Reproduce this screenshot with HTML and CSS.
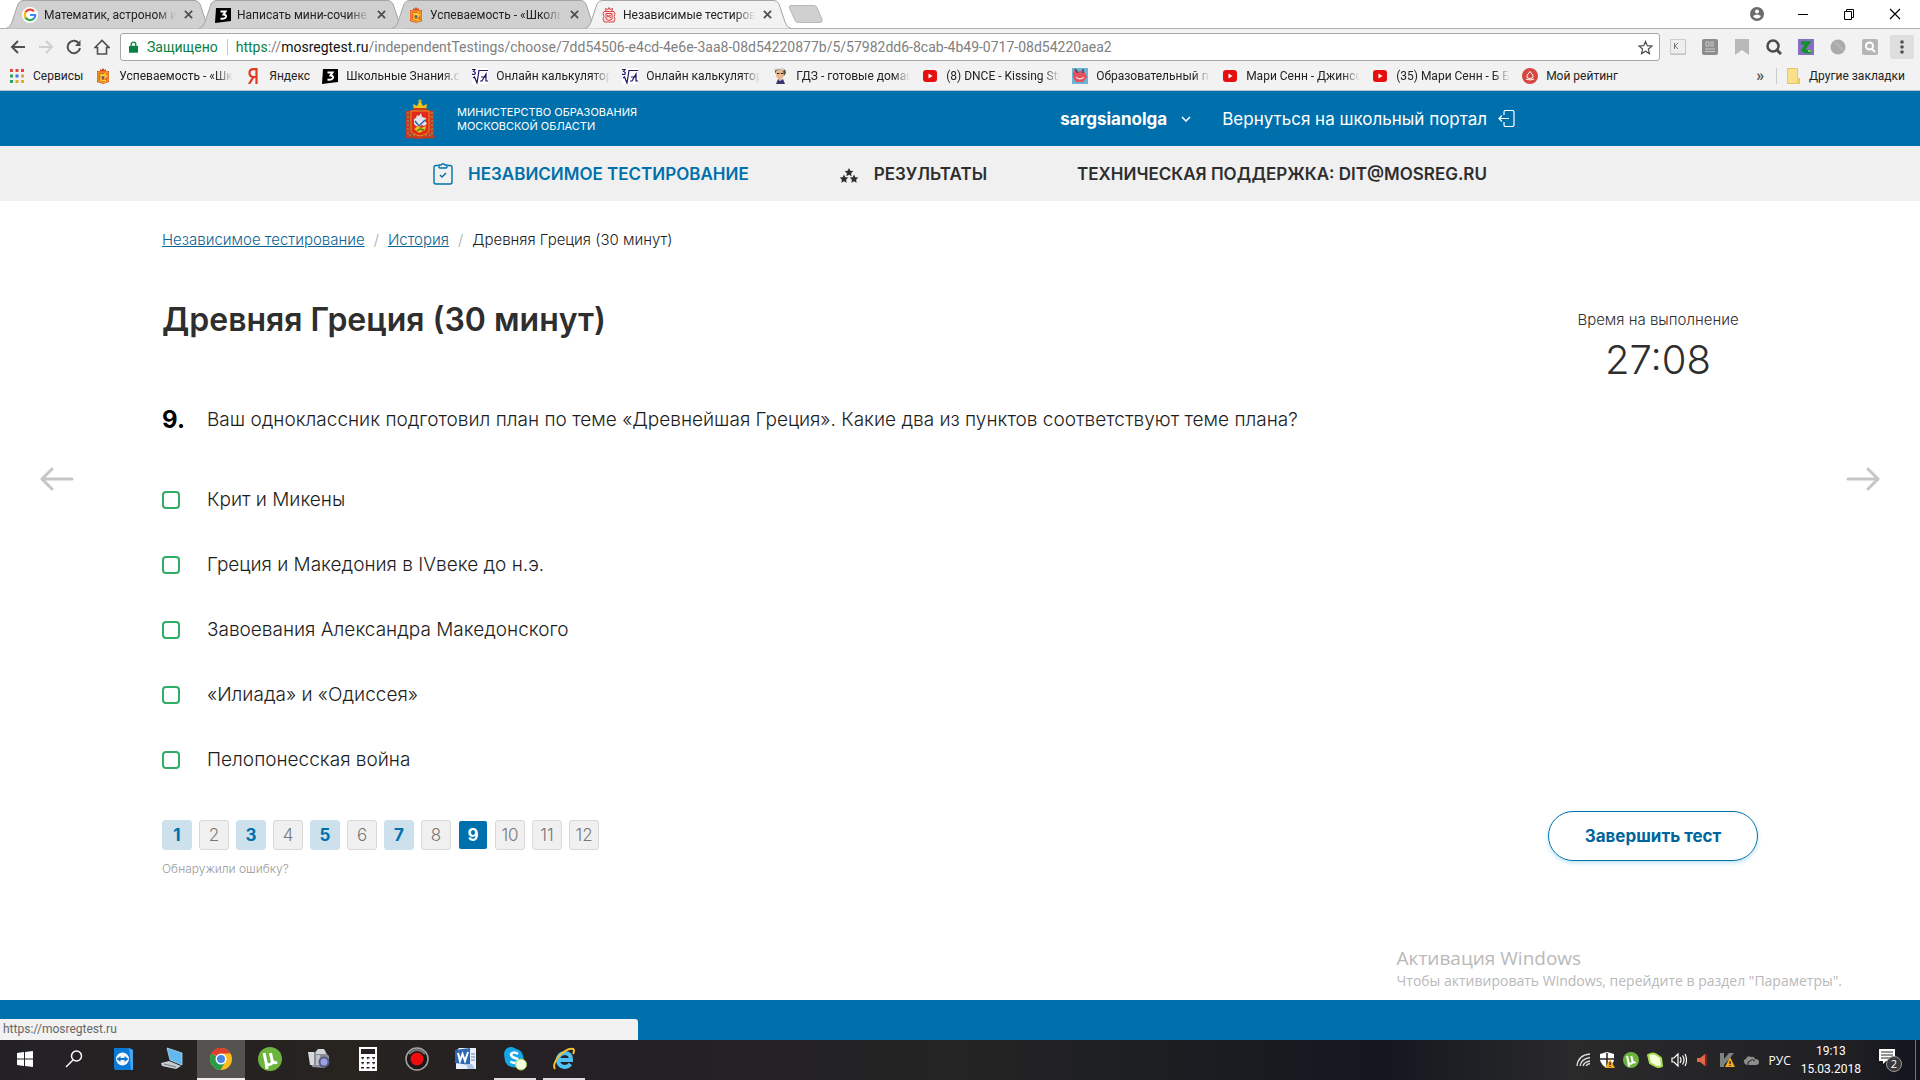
FILE: index.html
```html
<!DOCTYPE html>
<html lang="ru">
<head>
<meta charset="utf-8">
<title>Независимые тестирования</title>
<meta name="viewport" content="width=device-width, initial-scale=1">
<link rel="stylesheet" href="styles.css">
</head>
<body>
<svg class="sprite" aria-hidden="true">
  <symbol id="crest" viewBox="0 0 30 40">
    <path d="M9 11 8 5l4 2 3-6 3 6 4-2-1 6z" fill="#f0c414"/>
    <path d="M15 0v4M13 2h4" stroke="#e9b60f" stroke-width="1"/>
    <path d="M1 12q7 0 8-3h12q1 3 8 3v24l1 3-10 .5-5 .5-5-.5L0 39l1-3z" fill="#c93a24"/>
    <path d="M3 13v23h24V13" fill="none" stroke="#8a8a5a" stroke-width="1.500" stroke-dasharray="2 2"/>
    <path d="M6 12h18v20q-1 3-9 5-8-2-9-5z" fill="#e02b1c" stroke="#f0a414" stroke-width=".8"/>
    <path d="M9 25v-5l2-1 1-3 2 1 2-3 1 4 4 1-1 3 2 3-3 2-2-1-3 2-3-1z" fill="#dfe6ee"/>
    <path d="M10 22l4 5 6-6" fill="none" stroke="#35649c" stroke-width="1.500"/>
    <path d="M9 30l4-3 3 2 5-2-1 4-6 3z" fill="#e7c41b"/>
    <path d="M12 32l3-2 4 1" fill="none" stroke="#3c7a35" stroke-width="1.300"/>
  </symbol>
  <symbol id="crest-small" viewBox="0 0 16 16">
    <path d="M5 3V1l1.500 1L8 0l1.500 2L11 1v2h3v11l-6 2-6-2V3z" fill="#d9482b"/>
    <path d="M3 4h10v9l-5 2-5-2z" fill="#e8641f" stroke="#f0b323"/>
    <path d="M6 12V7h4v3l2-3M5 6l3 2 3-3M5 12l6 1" fill="none" stroke="#f8d33c" stroke-width="1.300"/>
    <path d="M7 9l2 1" stroke="#4a5f8c" stroke-width="2"/>
  </symbol>
  <symbol id="crest-red" viewBox="0 0 16 16">
    <g fill="none" stroke="#d84a4a"><path d="M5 4l-.5-2.500L7 2.500 8 .5l1 2 2.500-1L11 4M3 4.500h10l1 2-1 3 1 2-1 3.500H3l-1-3.500 1-2-1-3z" fill="#f9dede"/><path d="M5 6.500h6V12l-3 1.500L5 12zM6 8l4 3M10 8l-4 2"/></g>
  </symbol>
  <symbol id="znanija" viewBox="0 0 16 16">
    <path d="M1 1h15v13L0 16z" fill="#000"/><path d="M5.500 4.500h5L8.500 7.500q3 .3 2.500 2.500-1 2.500-5.500 1.500" fill="none" stroke="#fff" stroke-width="2"/>
  </symbol>
  <symbol id="root" viewBox="0 0 16 16">
    <path fill="#fff" d="M0 0h16v16H0z"/><path d="M0 1.500h3L1.500 3.500Q4 4 3 6 2 7 0 6M1 10l1.500-1L5 15 7 2.500h9M8 13h2l4-7v7h2M9 9h5" fill="none" stroke="#1b1464" stroke-width="1.200"/>
  </symbol>
  <symbol id="youtube" viewBox="0 0 16 16"><rect x="1" y="2" width="14" height="12" rx="3" fill="#e60f0f"/><path d="M6.500 5.500v5L10.500 8z" fill="#fff"/></symbol>
  <symbol id="utorrent" viewBox="0 0 24 24"><circle cx="12" cy="12" r="12" fill="#6cb33f"/><path d="M6 6l2 9q1 4 5 2 2-1 1-4L12.500 6M14 13q2 4 5 2M8 15l1 7" fill="none" stroke="#fff" stroke-width="3"/></symbol>
</svg>

<div class="browser">
  <div class="tabstrip">
    <nav class="tabs" aria-label="Вкладки">
      <div class="tab">
        <svg class="tab-shape" viewBox="0 0 206 29" preserveAspectRatio="none"><path d="M0 28.500Q4 28 6 22L12 4Q14 .5 17 .5H189Q192 .5 194 4L200 22Q202 28 206 28.500"/></svg>
        <svg class="i16" viewBox="0 0 16 16"><circle cx="8" cy="8" r="8" fill="#fff"/><g fill="none" stroke-width="2.200"><path d="M12 4.200A5.300 5.300 0 0 0 3.500 5.300" stroke="#ea4335"/><path d="M3.500 5.300a5.300 5.300 0 0 0 0 5.400" stroke="#fbbc05"/><path d="M3.500 10.700a5.300 5.300 0 0 0 8.300.9" stroke="#34a853"/><path d="M11.800 11.600Q13.400 10 13.200 8H8" stroke="#4285f4"/></g></svg>
        <a class="tab-name" href="#">Математик, астроном и</a>
        <button class="tab-close" aria-label="Закрыть"><svg viewBox="0 0 10 10"><path d="M1 1l8 8M9 1L1 9"/></svg></button>
      </div>
      <div class="tab">
        <svg class="tab-shape" viewBox="0 0 206 29" preserveAspectRatio="none"><path d="M0 28.500Q4 28 6 22L12 4Q14 .5 17 .5H189Q192 .5 194 4L200 22Q202 28 206 28.500"/></svg>
        <svg class="i16"><use href="#znanija"/></svg>
        <a class="tab-name" href="#">Написать мини-сочинен</a>
        <button class="tab-close" aria-label="Закрыть"><svg viewBox="0 0 10 10"><path d="M1 1l8 8M9 1L1 9"/></svg></button>
      </div>
      <div class="tab">
        <svg class="tab-shape" viewBox="0 0 206 29" preserveAspectRatio="none"><path d="M0 28.500Q4 28 6 22L12 4Q14 .5 17 .5H189Q192 .5 194 4L200 22Q202 28 206 28.500"/></svg>
        <svg class="i16"><use href="#crest-small"/></svg>
        <a class="tab-name" href="#">Успеваемость - «Школь</a>
        <button class="tab-close" aria-label="Закрыть"><svg viewBox="0 0 10 10"><path d="M1 1l8 8M9 1L1 9"/></svg></button>
      </div>
      <div class="tab tab-active">
        <svg class="tab-shape" viewBox="0 0 206 29" preserveAspectRatio="none"><path d="M0 28.500Q4 28 6 22L12 4Q14 .5 17 .5H189Q192 .5 194 4L200 22Q202 28 206 28.500"/></svg>
        <svg class="i16"><use href="#crest-red"/></svg>
        <a class="tab-name" href="#">Независимые тестирова</a>
        <button class="tab-close" aria-label="Закрыть"><svg viewBox="0 0 10 10"><path d="M1 1l8 8M9 1L1 9"/></svg></button>
      </div>
      <button class="tab-new" aria-label="Новая вкладка"><svg viewBox="0 0 36 18"><path d="M3 .5h23q2 0 3 2l5 12q1 3-2 3H10q-2 0-3-2L1.500 3Q.5.500 3 .5z"/></svg></button>
    </nav>
    <div class="window-buttons">
      <button aria-label="Профиль"><svg viewBox="0 0 14 14"><circle cx="7" cy="7" r="7" fill="#6b6b6b"/><circle cx="7" cy="4.500" r="2" fill="#fff"/><path d="M3 9q4-3 8 0-1.500 2.500-4 2.500T3 9z" fill="#fff"/></svg></button>
      <button aria-label="Свернуть"><svg viewBox="0 0 14 14"><path d="M2 7.500h10" stroke="#000"/></svg></button>
      <button aria-label="Окно"><svg viewBox="0 0 14 14"><path d="M2.500 4.500h7v8h-7zM4.500 4V2.500h7v8H10" fill="none" stroke="#000"/></svg></button>
      <button aria-label="Закрыть окно"><svg viewBox="0 0 14 14"><path d="M2 2l10 10M12 2L2 12" stroke="#000" stroke-width="1.200"/></svg></button>
    </div>
  </div>

  <div class="toolbar">
    <div class="nav-buttons">
      <button aria-label="Назад"><svg viewBox="0 0 16 16"><path d="M15 8H2M8 2L2 8l6 6"/></svg></button>
      <button class="off" aria-label="Вперёд"><svg viewBox="0 0 16 16"><path d="M1 8h13M8 2l6 6-6 6"/></svg></button>
      <button aria-label="Обновить"><svg viewBox="0 0 16 16"><path d="M13 4.500A6.200 6.200 0 1 0 14 9"/><path d="M14.500 1v6H9z" fill="#505050" stroke="none"/></svg></button>
      <button aria-label="Домой"><svg viewBox="0 0 16 16"><path d="M1 8.500L8 1.500l7 7h-2.500V15h-9V8.500z" stroke-width="1.600"/></svg></button>
    </div>
    <div class="omnibox">
      <svg class="lock" viewBox="0 0 10 13"><path d="M1 5h8q1 0 1 1v6q0 1-1 1H1q-1 0-1-1V6q0-1 1-1z" fill="#0b8043"/><path d="M2.500 5V3.500a2.500 2.500 0 0 1 5 0V5" fill="none" stroke="#0b8043" stroke-width="1.500"/></svg>
      <span class="secure">Защищено</span>
      <label class="host" for="address"><span class="scheme">https</span><span class="dim">://</span>mosregtest.ru</label>
      <input id="address" class="path" type="text" value="/independentTestings/choose/7dd54506-e4cd-4e6e-3aa8-08d54220877b/5/57982dd6-8cab-4b49-0717-08d54220aea2">
      <svg class="star" viewBox="0 0 16 16"><path d="M8 1.500l1.900 4.600 4.900.4-3.700 3.200 1.100 4.800L8 11.900l-4.200 2.600 1.100-4.800L1.200 6.500l4.900-.4z" fill="none" stroke="#505050" stroke-width="1.300"/></svg>
    </div>
    <div class="extensions">
      <button aria-label="K"><svg viewBox="0 0 16 16"><path d="M.5.500h15v15H.5z" fill="#eee" stroke="#ccc"/><path d="M1 15h15V2" fill="none" stroke="#bbb"/><path d="M4.500 4v6M8 4L5 7l3 3" fill="none" stroke="#777"/></svg></button>
      <button aria-label="Расширение"><svg viewBox="0 0 16 16"><rect width="16" height="16" rx="2" fill="#8d8d8d"/><path d="M4 3h3v4H4zM8 3h4M8 5h4M8 7h4M3 10h10M3 12.500h10" fill="none" stroke="#ccc"/></svg></button>
      <button aria-label="Закладка"><svg viewBox="0 0 16 16"><path d="M1 0h14v16l-7-5-7 5z" fill="#b9b9b9"/></svg></button>
      <button aria-label="Поиск"><svg viewBox="0 0 16 16"><circle cx="7" cy="7" r="5.500" fill="none" stroke="#4b4b4b" stroke-width="2.500"/><path d="M10.500 10.500L15 15" stroke="#4b4b4b" stroke-width="3"/></svg></button>
      <button aria-label="Z"><svg viewBox="0 0 16 16"><path d="M0 0h16v16H0z" fill="#8670c4"/><path d="M3 4h7l-5 7q4 3 8 1" fill="none" stroke="#14902a" stroke-width="3.500"/><path d="M10 12h3" stroke="#69d451" stroke-width="2"/></svg></button>
      <button aria-label="Круг"><svg viewBox="0 0 16 16"><circle cx="8" cy="8" r="7.500" fill="#aaa"/><path d="M5 3l8 8" stroke="#b8b8b8" stroke-width="2"/></svg></button>
      <button aria-label="Поиск по странице"><svg viewBox="0 0 16 16"><rect width="16" height="16" rx="2" fill="#b5b5b5"/><circle cx="7.500" cy="7" r="3.500" fill="none" stroke="#fff" stroke-width="2"/><path d="M10 10l3 3" stroke="#fff" stroke-width="2"/></svg></button>
      <button class="menu" aria-label="Меню"><svg viewBox="0 0 16 16"><g fill="#505050"><circle cx="8" cy="3" r="1.800"/><circle cx="8" cy="8" r="1.800"/><circle cx="8" cy="13" r="1.800"/></g></svg></button>
    </div>
  </div>

  <div class="bookmarks">
    <a class="bm" href="#"><svg class="i16" viewBox="0 0 16 16"><path d="M1 1h3v3H1zM6.500 1h3v3h-3zM12 1h3v3h-3z" fill="#dd4b3e"/><path d="M1 6.500h3v3H1z" fill="#30a05a"/><path d="M6.500 6.500h3v3h-3z" fill="#4374e0"/><path d="M12 6.500h3v3h-3zM6.500 12h3v3h-3zM12 12h3v3h-3z" fill="#e0a92f"/><path d="M1 12h3v3H1z" fill="#30a05a"/></svg><span>Сервисы</span></a>
    <a class="bm long" href="#"><svg class="i16"><use href="#crest-small"/></svg><span>Успеваемость - «Шко</span></a>
    <a class="bm" href="#"><svg class="i16" viewBox="0 0 16 16"><path d="M11.500 0v16M11 1.200H8.500Q4.500 1.200 4.500 5t4 4H11M8.500 9L4 16" fill="none" stroke="#e03a20" stroke-width="2.200"/></svg><span>Яндекс</span></a>
    <a class="bm long" href="#"><svg class="i16"><use href="#znanija"/></svg><span>Школьные Знания.co</span></a>
    <a class="bm long" href="#"><svg class="i16"><use href="#root"/></svg><span>Онлайн калькулятор</span></a>
    <a class="bm long" href="#"><svg class="i16"><use href="#root"/></svg><span>Онлайн калькулятор</span></a>
    <a class="bm long" href="#"><svg class="i16" viewBox="0 0 16 16"><path d="M3 4q-1-4 5-4t6 5l-2 3H5z" fill="#5d5138"/><path d="M4 3q4-3 7 0l1 5-3 4H7L4 8z" fill="#e8b98b"/><path d="M2 2q5-3 10 0" stroke="#ddd" stroke-width="2" fill="none"/><path d="M5 5.500h2.500M9 5.500h2" stroke="#222"/><path d="M4 16l2-5 2 2 3-2 2 5z" fill="#37366f"/></svg><span>ГДЗ - готовые домаш</span></a>
    <a class="bm long" href="#"><svg class="i16"><use href="#youtube"/></svg><span>(8) DNCE - Kissing Str</span></a>
    <a class="bm long" href="#"><svg class="i16" viewBox="0 0 16 16"><path d="M0 0h16v16H0z" fill="#6cb4d4"/><path d="M1 5l2-4 3 3 5-2 2 3 2 4-4 5H4L1 9z" fill="#e5505f"/><path d="M3 1l3 4M11 1v4" stroke="#39506f" stroke-width="1.500"/><path d="M4 9q4 4 8 0" stroke="#fff" fill="none"/></svg><span>Образовательный по</span></a>
    <a class="bm long" href="#"><svg class="i16"><use href="#youtube"/></svg><span>Мари Сенн - Джинсо</span></a>
    <a class="bm long" href="#"><svg class="i16"><use href="#youtube"/></svg><span>(35) Мари Сенн - Б Б</span></a>
    <a class="bm" href="#"><svg class="i16" viewBox="0 0 16 16"><circle cx="8" cy="8" r="8" fill="#d5473f"/><path d="M8 3.500l2 2.500q3 4-2 4.500Q3 10 6 6zM4 11q4 2 8 0" fill="none" stroke="#fff"/></svg><span>Мой рейтинг</span></a>
    <button class="more" aria-label="Ещё закладки">»</button>
    <a class="bm other" href="#"><svg class="i16" viewBox="0 0 16 16"><path d="M2 0h11v16H2z" fill="#fbe08a"/><path d="M12 11h3v5h-3z" fill="#f6cf56"/><path d="M2.500.5h10v10h2v5h-12z" fill="none" stroke="#e8c665"/></svg><span>Другие закладки</span></a>
  </div>
</div>

<div class="site">
  <header class="site-header">
    <div class="header-inner">
      <svg class="crest"><use href="#crest"/></svg>
      <div class="ministry">МИНИСТЕРСТВО ОБРАЗОВАНИЯ<br>МОСКОВСКОЙ ОБЛАСТИ</div>
      <button class="user">sargsianolga <svg viewBox="0 0 10 6"><path d="M1 1l4 4 4-4"/></svg></button>
      <a class="portal" href="#">Вернуться на школьный портал <svg viewBox="0 0 17 17"><path d="M6 5V2q0-1.500 1.500-1.500h7Q16 .5 16 2v13q0 1.500-1.500 1.500h-7Q6 16.500 6 15v-3M11 8.500H1M4 5.500l-3 3 3 3"/></svg></a>
    </div>
  </header>
  <nav class="site-nav">
    <a class="current" href="#"><svg viewBox="0 0 20 22"><path d="M5 2.500H3Q1 2.500 1 4.500V19q0 2 2 2h14q2 0 2-2V4.500q0-2-2-2h-2M6 2h2q2-2.500 4 0h2v2q0 1-1 1H7Q6 5 6 4zM7 12l2 2 4-4" fill="none" stroke="#0070ac" stroke-width="1.400"/></svg>НЕЗАВИСИМОЕ ТЕСТИРОВАНИЕ</a>
    <a href="#"><svg viewBox="0 0 20 22"><g fill="#2e2e2e"><path id="st" d="M10 5l1.300 2.700 3 .4-2.200 2.100.5 3L10 11.800l-2.600 1.400.5-3-2.200-2.100 3-.4z"/><use href="#st" x="-5" y="6.500"/><use href="#st" x="5" y="6.500"/></g></svg>РЕЗУЛЬТАТЫ</a>
    <a href="#">ТЕХНИЧЕСКАЯ ПОДДЕРЖКА: DIT@MOSREG.RU</a>
  </nav>

  <div class="stage">
    <button class="step" aria-label="Предыдущий вопрос"><svg viewBox="0 0 34 24"><path d="M32 12H2M12 2L2 12l10 10"/></svg></button>
    <main class="test">
      <nav class="crumbs" aria-label="Путь">
        <a href="#">Независимое тестирование</a><i>/</i><a href="#">История</a><i>/</i><span>Древняя Греция (30 минут)</span>
      </nav>
      <div class="head">
        <h1>Древняя Греция (30 минут)</h1>
        <div class="timer"><span>Время на выполнение</span><time>27:08</time></div>
      </div>
      <form>
        <div class="question"><b>9.</b><p>Ваш одноклассник подготовил план по теме «Древнейшая Греция». Какие два из пунктов соответствуют теме плана?</p></div>
        <div class="answers">
          <label><input type="checkbox">Крит и Микены</label>
          <label><input type="checkbox">Греция и Македония в IVвеке до н.э.</label>
          <label><input type="checkbox">Завоевания Александра Македонского</label>
          <label><input type="checkbox">«Илиада» и «Одиссея»</label>
          <label><input type="checkbox">Пелопонесская война</label>
        </div>
        <div class="bottom">
          <div>
            <div class="pages">
              <button type="button" class="done">1</button><button type="button">2</button><button type="button" class="done">3</button><button type="button">4</button><button type="button" class="done">5</button><button type="button">6</button><button type="button" class="done">7</button><button type="button">8</button><button type="button" class="now">9</button><button type="button">10</button><button type="button">11</button><button type="button">12</button>
            </div>
            <a class="report" href="#">Обнаружили ошибку?</a>
          </div>
          <button type="button" class="finish">Завершить тест</button>
        </div>
      </form>
    </main>
    <button class="step next" aria-label="Следующий вопрос"><svg viewBox="0 0 34 24"><path d="M2 12h30M22 2l10 10-10 10"/></svg></button>
    <div class="watermark"><strong>Активация Windows</strong><span>Чтобы активировать Windows, перейдите в раздел "Параметры".</span></div>
  </div>
  <footer class="site-footer"><div class="status">https://mosregtest.ru</div></footer>
</div>

<div class="taskbar">
  <div class="apps">
    <button aria-label="Пуск"><svg viewBox="0 0 24 24"><path d="M4 6l7-1v6.500H4zM12 5l8-1v7.500h-8zM4 12.500h7V19l-7-1zM12 12.500h8V20l-8-1z" fill="#fff"/></svg></button>
    <button aria-label="Поиск"><svg viewBox="0 0 24 24"><circle cx="14.500" cy="9" r="5" fill="none" stroke="#fff" stroke-width="1.500"/><path d="M11 13l-7 7" stroke="#fff" stroke-width="1.500"/></svg></button>
    <button aria-label="TeamViewer"><svg viewBox="0 0 24 24"><path d="M3 1h15l4 2v20H4L3 21z" fill="#0b78d4"/><path d="M18 1l4 2v20h-2z" fill="#45a5ee"/><circle cx="11.500" cy="12" r="6.500" fill="#f4f8fc"/><path d="M5.500 12l4-3v2h4V9l4 3-4 3v-2h-4v2z" fill="#1178cf"/></svg></button>
    <button aria-label="Компьютер"><svg viewBox="0 0 24 24"><path d="M7 1l15 5v12L10 13z" fill="#62b8ef" stroke="#a8dcf8" stroke-width=".8"/><path d="M1 16l8-2 12 5-5 3-14-3z" fill="#c7ced3"/><path d="M4 17l12 3" stroke="#6b7780"/></svg></button>
    <button class="active" aria-label="Chrome"><svg viewBox="0 0 24 24"><circle cx="12" cy="12" r="11" fill="#fbbc1c"/><path d="M2.500 6.500A11 11 0 0 1 21.500 6.500H12z" fill="#dc3e2f"/><path d="M2.500 6.500a11 11 0 0 0 9 16.500l5-8.500L12 12z" fill="#289c4b"/><path d="M2.500 6.500A11 11 0 0 1 12 1v10z" fill="#dc3e2f"/><circle cx="12" cy="12" r="5.500" fill="#fff"/><circle cx="12" cy="12" r="4" fill="#4a86e8"/></svg></button>
    <button aria-label="uTorrent"><svg><use href="#utorrent"/></svg></button>
    <button aria-label="Камера"><svg viewBox="0 0 24 24"><path d="M3 6l5-1 2-2h8l2 4 2 2v8l-5 4-12-1z" fill="#8b8e96"/><path d="M1 5h6v13H3z" fill="#d8d9de"/><path d="M9 5l2-3h6l2 5H9z" fill="#d4d5da"/><path d="M9 8h4v10H9z" fill="#c0c1c6"/><circle cx="17" cy="15" r="5.500" fill="#555c82"/><circle cx="17" cy="15" r="3.500" fill="#9ba2df"/></svg></button>
    <button aria-label="Калькулятор"><svg viewBox="0 0 24 24"><path d="M3 0h18v24H3z" fill="#fff"/><path d="M5 2h14v5H5z" fill="#242124"/><path d="M5 10h3v1.500H6.500V13M10.500 10h3v1.500H12V13M16 10h3v1.500h-1.500V13M5 15h3v1.500H6.500V18M10.500 15h3v1.500H12V18M16 15h3v1.500h-1.500V18M5 20h3v1.500H5zM10.500 20h3v1.500h-3zM16 20h3v1.500h-3z" fill="#242124"/></svg></button>
    <button aria-label="Запись"><svg viewBox="0 0 24 24"><circle cx="12" cy="12" r="11" fill="#1c1819" stroke="#a7a3a4" stroke-width="1.500"/><path d="M4 7q8-8 16 0" stroke="#777" stroke-width="2" fill="none"/><circle cx="12" cy="12" r="6.500" fill="#f00c0c"/></svg></button>
    <button aria-label="Word"><svg viewBox="0 0 24 24"><path d="M5 1h17v21H2V4z" fill="#e9f0fa"/><path d="M1 3l15-2v17L1 16z" fill="#2d66b3"/><path d="M4 6l2 8 2.500-7 2.500 7 3-9" fill="none" stroke="#fff" stroke-width="2"/><path d="M17 7h4M17 10h4M17 13h4" stroke="#5282c3"/><path d="M12 17h6l3 5h-7z" fill="#aec6e5"/></svg></button>
    <button class="open" aria-label="Skype"><svg viewBox="0 0 24 24"><circle cx="8" cy="7" r="7" fill="#16a7e8"/><circle cx="11" cy="11" r="9.500" fill="#16a7e8"/><path d="M15 7q-4-3-7 0 0 3 4 4t3 3.500q-3 3-7.500 0" fill="none" stroke="#fff" stroke-width="2.500"/><circle cx="18" cy="17.500" r="5.500" fill="#f5ffe0" stroke="#a9cf55"/></svg></button>
    <button class="open" aria-label="Internet Explorer"><svg viewBox="0 0 24 24"><path d="M18.500 17Q16 20 12.500 20 6 19 6 13t6.500-7q6.500 0 6.500 7H7" fill="none" stroke="#4fc1f3" stroke-width="4"/><path d="M3 22Q0 18 7 9 16 0 21 2q2 1 0 5" fill="none" stroke="#f3c12f" stroke-width="2"/></svg></button>
  </div>
  <div class="tray">
    <div class="tray-icons">
      <svg viewBox="0 0 16 16"><g fill="none" stroke="#ddd" stroke-width="1.300"><path d="M2 14Q3 3 15 2M5 14Q6 7 15 5.500M8 14q1-4 7-5M11 14q1-2 4-2.500"/></g></svg>
      <svg viewBox="0 0 16 16"><path d="M1 2l7-2 7 2v6q-1 5-7 8-6-3-7-8z" fill="#fff"/><path d="M8 1v14M1 7h14" stroke="#242426" stroke-width="1.500"/><path d="M11 7l5 9H6z" fill="#f4aa21"/><path d="M11 10v3M11 14v1" stroke="#222" stroke-width="1.300"/></svg>
      <svg><use href="#utorrent"/></svg>
      <svg viewBox="0 0 16 16"><path d="M1 3q5-3 9 0l4 3 1 8q-4 2-7 0l-5-3z" fill="#f4ffdc" stroke="#a8d94c" stroke-width="2"/></svg>
      <svg viewBox="0 0 16 16"><g fill="none" stroke="#fff" stroke-width="1.200"><path d="M1 6h2l4-4v12l-4-4H1zM9 5q2 3 0 6M11.500 3.500q3 4.500 0 9M14 2q3 6 0 12"/></g></svg>
      <svg viewBox="0 0 16 16"><path d="M2 6h3l5-4v12l-5-4H2z" fill="#e0674a"/><path d="M11 2v12" stroke="#6b2b22" stroke-width="2"/></svg>
      <svg viewBox="0 0 16 16"><path d="M1 1h4v14H1zM5 7l5-6h5L5 13z" fill="#7d8380"/><path d="M11 5l5 10H6z" fill="#f7a81d"/><path d="M11 9v3M11 13v1" stroke="#222" stroke-width="1.300"/></svg>
      <svg viewBox="0 0 16 16"><path d="M2 12q-3-4 1-5 1-4 5-2 3-1 4 2 4 0 4 3t-3 3H4z" fill="#8d8d8d"/><path d="M5 13q-1-4 2-4 2-3 5 0" fill="none" stroke="#242426"/></svg>
    </div>
    <button class="lang">РУС</button>
    <div class="clock"><time>19:13</time><time>15.03.2018</time></div>
    <button class="notice" aria-label="Уведомления"><svg viewBox="0 0 26 26"><path d="M2 2h16v12H9l-3 3v-3H2z" fill="#fff"/><path d="M4 5h12M4 8h12M4 11h12" stroke="#242426"/><circle cx="17" cy="17" r="7.500" fill="#39393b" stroke="#99999b"/><text x="17" y="21" text-anchor="middle">2</text></svg></button>
  </div>
</div>
</body>
</html>
```
FILE: styles.css
```css
* { box-sizing: border-box; }
body {
  margin: 0;
  min-height: 100vh;
  display: flex;
  flex-direction: column;
  background: #fff;
  color: #1d1d1d;
  font-family: "Open Sans", "Noto Sans", sans-serif;
  font-size: 12px;
}
button { border: 0; padding: 0; background: none; font: inherit; color: inherit; }
a { color: inherit; text-decoration: none; }
svg { display: block; flex: none; }
.sprite { position: absolute; width: 0; height: 0; }
.i16 { width: 16px; height: 16px; }

/* Browser frame */
.browser { background: #f2f2f2; color: #222; font-family: Roboto, "Open Sans", sans-serif; white-space: nowrap; border-bottom: 1px solid #b8c4cb; }
.tabstrip { display: flex; justify-content: space-between; height: 29px; background: #fff; border-bottom: 1px solid #b0b0b0; }
.tabs { display: flex; padding-left: 6px; }
.tab { position: relative; display: flex; align-items: center; width: 206px; height: 29px; margin-right: -13px; padding: 0 19px 0 16px; }
.tab-shape { position: absolute; inset: 0; width: 100%; height: 100%; fill: #d0d0d0; stroke: #a5a5a5; }
.tab-active { z-index: 1; }
.tab-active .tab-shape { fill: #f2f2f2; }
.tab > .i16 { position: relative; }
.tab-name { position: relative; flex: 1; margin: 0 8px 0 6px; overflow: hidden; mask-image: linear-gradient(90deg, #000 85%, transparent); }
.tab-close { position: relative; }
.tab-close svg { width: 9px; height: 9px; stroke: #505050; stroke-width: 2; }
.tab-new { margin-left: 10px; }
.tab-new svg { width: 36px; height: 18px; fill: #d0d0d0; stroke: #b8b8b8; }
.window-buttons { display: flex; align-items: center; gap: 32px; padding-right: 18px; }
.window-buttons svg { width: 14px; height: 14px; }

.toolbar { display: flex; align-items: center; gap: 10px; height: 36px; padding: 0 6px 0 10px; }
.nav-buttons { display: flex; gap: 12px; }
.nav-buttons svg { width: 16px; height: 16px; fill: none; stroke: #505050; stroke-width: 2; }
.nav-buttons .off svg { stroke: #cfcfcf; }
.omnibox { flex: 1; display: flex; align-items: center; height: 28px; padding: 0 6px 0 8px; background: #fff; border: 1px solid #a8a8a8; border-radius: 3px; font-size: 14px; }
.lock { width: 9px; height: 12px; }
.secure { margin-left: 9px; padding-right: 9px; border-right: 1px solid #c8c8c8; color: #0b8043; line-height: 16px; }
.host { margin-left: 8px; color: #111; }
.scheme { color: #0b8043; }
.dim { color: #808080; }
.path { flex: 1; min-width: 0; border: 0; padding: 0; background: none; color: #808080; font: inherit; outline: 0; }
.star { width: 15px; height: 15px; }
.extensions { display: flex; align-items: center; gap: 16px; }
.extensions svg { width: 16px; height: 16px; }
.extensions .menu { margin-left: -4px; padding: 4px; background: #dedede; border-radius: 2px; }

.bookmarks { display: flex; align-items: center; gap: 12px; height: 25px; padding: 0 15px 3px 9px; }
.bm { display: flex; align-items: center; gap: 8px; }
.long span { width: 114px; overflow: hidden; mask-image: linear-gradient(90deg, #000 85%, transparent); }
.more { margin-left: auto; font-size: 16px; line-height: 16px; font-weight: 600; color: #505050; }
.other { padding-left: 8px; border-left: 1px solid #ccc; }

/* Site */
.site { flex: 1; display: flex; flex-direction: column; font-family: Inter, "Open Sans", sans-serif; }
.site-header { background: #0070ac; color: #fff; }
.header-inner { display: flex; align-items: center; max-width: 1110px; height: 55px; margin: 0 auto; }
.crest { width: 30px; height: 40px; }
.ministry { margin: 0 auto 0 22px; font-size: 11px; line-height: 14px; }
.user { display: flex; align-items: center; gap: 14px; margin-right: 31px; font-size: 17px; font-weight: 700; }
.user svg { width: 10px; height: 6px; fill: none; stroke: #fff; stroke-width: 1.500; }
.portal { display: flex; align-items: center; gap: 11px; font-size: 17px; }
.portal svg { width: 17px; height: 17px; fill: none; stroke: #fff; stroke-width: 1.200; }
.site-nav { display: flex; justify-content: center; align-items: center; gap: 90px; height: 55px; background: #f0f0f0; color: #2e2e2e; font-size: 17px; font-weight: 600; }
.site-nav a { display: flex; align-items: center; gap: 15px; }
.site-nav svg { width: 20px; height: 22px; }
.site-nav .current { color: #0070ac; }

.stage { position: relative; flex: 1; display: grid; grid-template-columns: 162px minmax(0, 1fr) 162px; align-items: start; }
.step { justify-self: start; margin: 266px 40px 0; }
.next { justify-self: end; }
.step svg { width: 34px; height: 24px; fill: none; stroke: #c6c6c6; stroke-width: 3; stroke-linecap: round; stroke-linejoin: round; }
.test { padding-top: 29px; }
.crumbs { display: flex; gap: 9px; font-size: 15px; line-height: 20px; font-weight: 300; }
.crumbs a { color: #0e6590; text-decoration: underline; }
.crumbs i { color: #aaa; font-style: normal; }
.head { display: flex; justify-content: space-between; align-items: start; margin-top: 47px; }
h1 { margin: 0; color: #2e2e2e; font-size: 32px; line-height: 46px; font-weight: 600; }
.timer { display: flex; flex-direction: column; align-items: center; width: 200px; padding-top: 13px; color: #2e2e2e; font-size: 15px; line-height: 20px; font-weight: 300; }
.timer time { margin-top: 6px; font-size: 40px; line-height: 48px; }
.question { display: flex; align-items: center; margin-top: 21px; line-height: 30px; }
.question b { width: 45px; color: #000; font-size: 24px; }
.question p { margin: 0; font-size: 19px; font-weight: 300; }
.answers { display: flex; flex-direction: column; gap: 35px; margin-top: 50px; font-size: 19px; line-height: 30px; font-weight: 300; }
.answers label { display: flex; align-items: center; gap: 27px; }
.answers input { appearance: none; width: 18px; height: 18px; margin: 0; border: 2px solid #2fae66; border-radius: 4px; }
.bottom { display: flex; justify-content: space-between; margin-top: 36px; }
.pages { display: flex; gap: 7px; margin-top: 9px; }
.pages button { width: 30px; height: 30px; border: 1px solid #d8d8d8; border-radius: 3px; background: #f0f0f0; color: #777; font-size: 17px; font-weight: 300; }
.pages .done { border-color: #cde1ec; background: #cde1ec; color: #0070ac; font-weight: 700; }
.pages .now { border-color: #fff; background: #0070ac; color: #fff; font-weight: 700; }
.report { display: block; margin-top: 10px; color: #999; font-size: 12px; line-height: 18px; font-weight: 300; }
.finish { width: 210px; height: 50px; border: 1px solid #0070ac; border-radius: 25px; color: #00659c; font-size: 17px; font-weight: 700; box-shadow: 0 2px 4px #bfe2f4; }
.watermark { position: absolute; right: 78px; bottom: 9px; display: flex; flex-direction: column; color: #b9b9b9; font-family: "Open Sans", sans-serif; font-size: 14px; line-height: 20px; }
.watermark strong { font-size: 19px; line-height: 26px; font-weight: 400; }
.site-footer { position: relative; height: 40px; background: #0070ac; }
.status { position: absolute; left: 0; bottom: 0; width: 638px; height: 21px; padding-left: 3px; border-top-right-radius: 3px; background: #f2f2f2; color: #666; font-family: Roboto, sans-serif; font-size: 12px; line-height: 21px; }

/* Taskbar */
.taskbar { display: flex; justify-content: space-between; height: 40px; background: linear-gradient(90deg, #242126 0, #27231f 18%, #242026 32%, #242424 50%, #14171f 72%, #2a2a2b 82%, #202024 96%, #12141e); color: #fff; }
.apps { display: flex; gap: 1px; padding-left: 1px; }
.apps button { display: flex; align-items: center; justify-content: center; width: 48px; height: 40px; border-bottom: 2px solid transparent; }
.apps svg { width: 24px; height: 24px; }
.apps .active { background: #55534f; border-color: #eee; }
.apps .open { border-image: linear-gradient(90deg, transparent 4px, #ddd 4px, #ddd 44px, transparent 44px) 1; }
.tray { display: flex; align-items: center; gap: 10px; padding-right: 4px; }
.tray-icons { display: flex; gap: 8px; }
.tray-icons svg { width: 16px; height: 16px; }
.clock { display: flex; flex-direction: column; align-items: center; font-family: Roboto, sans-serif; line-height: 18px; }
.notice { height: 40px; margin-left: 6px; padding-right: 12px; border-right: 1px solid #777; }
.notice svg { width: 26px; height: 26px; }
.notice text { fill: #fff; font-size: 11px; }
```
